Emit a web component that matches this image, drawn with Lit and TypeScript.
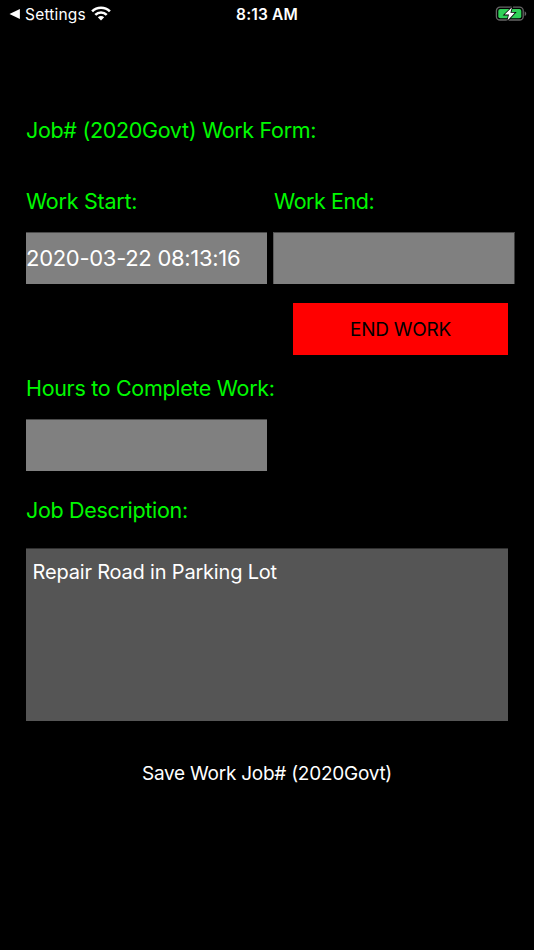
import { LitElement, html, css } from "lit";
import { customElement } from "lit/decorators.js";

@customElement("status-bar")
class StatusBar extends LitElement {
  static styles = css`
    :host { display: grid; grid-template-columns: 1fr auto 1fr; align-items: center; height: 27px; padding: 0 7px 0 9px; color: #fff; font-size: 16px; line-height: 27px; }
    .left { display: flex; align-items: center; }
    .settings { margin-left: 5px; letter-spacing: 0.2px; font-size: 15.5px; line-height: 27px; padding-top: 1px; }
    .wifi { margin-left: 5px; margin-top: -1px; }
    .time { font-weight: 600; font-size: 15.5px; line-height: 27px; padding-top: 1px; letter-spacing: 0.15px; margin-right: 2px; }
    .battery { justify-self: end; }
    svg { display: block; }
  `;
  render() {
    return html`
      <div class="left">
        <svg width="11" height="10" viewBox="0 0 11 10"><path d="M0.5 5 L10.9 0 V10 Z" fill="#fff" /></svg>
        <span class="settings">Settings</span>
        <svg class="wifi" width="20" height="15" viewBox="0 0 20 15">
          <g fill="none" stroke="#fff" stroke-width="2.6">
            <path d="M1.1 5.4 A12.6 12.6 0 0 1 18.9 5.4" />
            <path d="M4.3 8.9 A8.1 8.1 0 0 1 15.7 8.9" />
          </g>
          <path d="M10 14.6 L6.8 11.3 A4.9 4.9 0 0 1 13.2 11.3 Z" fill="#fff" />
        </svg>
      </div>
      <span class="time">8:13 AM</span>
      <svg class="battery" width="32" height="16" viewBox="0 0 32 16">
        <rect x="1.4" y="1.2" width="26.8" height="12.8" rx="3.6" fill="none" stroke="#666" stroke-width="1.3" />
        <path d="M29.6 5.3 V10.1 C31.8 9.4 31.8 6 29.6 5.3Z" fill="#666" />
        <rect x="3.3" y="3" width="23" height="9.2" rx="2" fill="#30d158" />
        <path d="M17 1.3 L9.6 8.6 H14 L12.4 14.6 L19.8 6.8 H15.4Z" fill="#fff" stroke="#000" stroke-width="1.6" paint-order="stroke" />
      </svg>
    `;
  }
}

@customElement("app-root")
class AppRoot extends LitElement {
  static styles = css`
    :host { display: block; box-sizing: border-box; width: 534px; height: 950px; overflow: hidden; background: #000; color: #fff; font-family: Inter, "Liberation Sans", sans-serif; }
    status-bar { box-sizing: border-box; }
    .form { padding: 83px 19px 0 26px; display: flex; flex-direction: column; }
    .label { color: #00f900; font-size: 21.5px; line-height: 40px; letter-spacing: -0.32px; white-space: nowrap; }
    .times { display: grid; grid-template-columns: 241px 242px; column-gap: 6px; margin-top: 31px; }
    .start { letter-spacing: -0.24px; }
    .finish { padding-left: 1px; letter-spacing: -0.45px; }
    .field { box-sizing: border-box; height: 52px; margin-top: 11px; border-top: 1px solid #4a4a4a; background: #808080; font-size: 22px; line-height: 50px; letter-spacing: -0.29px; white-space: nowrap; }
    .finish + .field { border-left: 1px solid #5c5c5c; border-right: 1px solid #3c3c3c; }
    .hours { width: 241px; }
    .end { align-self: flex-end; box-sizing: border-box; width: 215px; height: 52px; margin: 19px 7px 13px 0; background: #f00; color: #000; text-align: center; font-size: 19px; line-height: 53px; letter-spacing: -0.25px; }
    .desc-label { margin-top: 19px; }
    .description { box-sizing: border-box; width: 482px; height: 173px; margin-top: 18px; padding: 9px 6.6px; border-top: 1px solid #303030; background: #555; font-size: 20px; line-height: 28px; letter-spacing: -0.19px; }
    .save { width: 482px; margin-top: 33px; text-align: center; font-size: 19px; line-height: 40px; letter-spacing: -0.25px; }
  `;
  render() {
    return html`
      <status-bar></status-bar>
      <div class="form">
        <div class="label">Job# (2020Govt) Work Form:</div>
        <div class="times">
          <div>
            <div class="label start">Work Start:</div>
            <div class="field">2020-03-22 08:13:16</div>
          </div>
          <div>
            <div class="label finish">Work End:</div>
            <div class="field"></div>
          </div>
        </div>
        <div class="end">END WORK</div>
        <div class="label">Hours to Complete Work:</div>
        <div class="field hours"></div>
        <div class="label desc-label">Job Description:</div>
        <div class="description">Repair Road in Parking Lot</div>
        <div class="save">Save Work Job# (2020Govt)</div>
      </div>
    `;
  }
}
